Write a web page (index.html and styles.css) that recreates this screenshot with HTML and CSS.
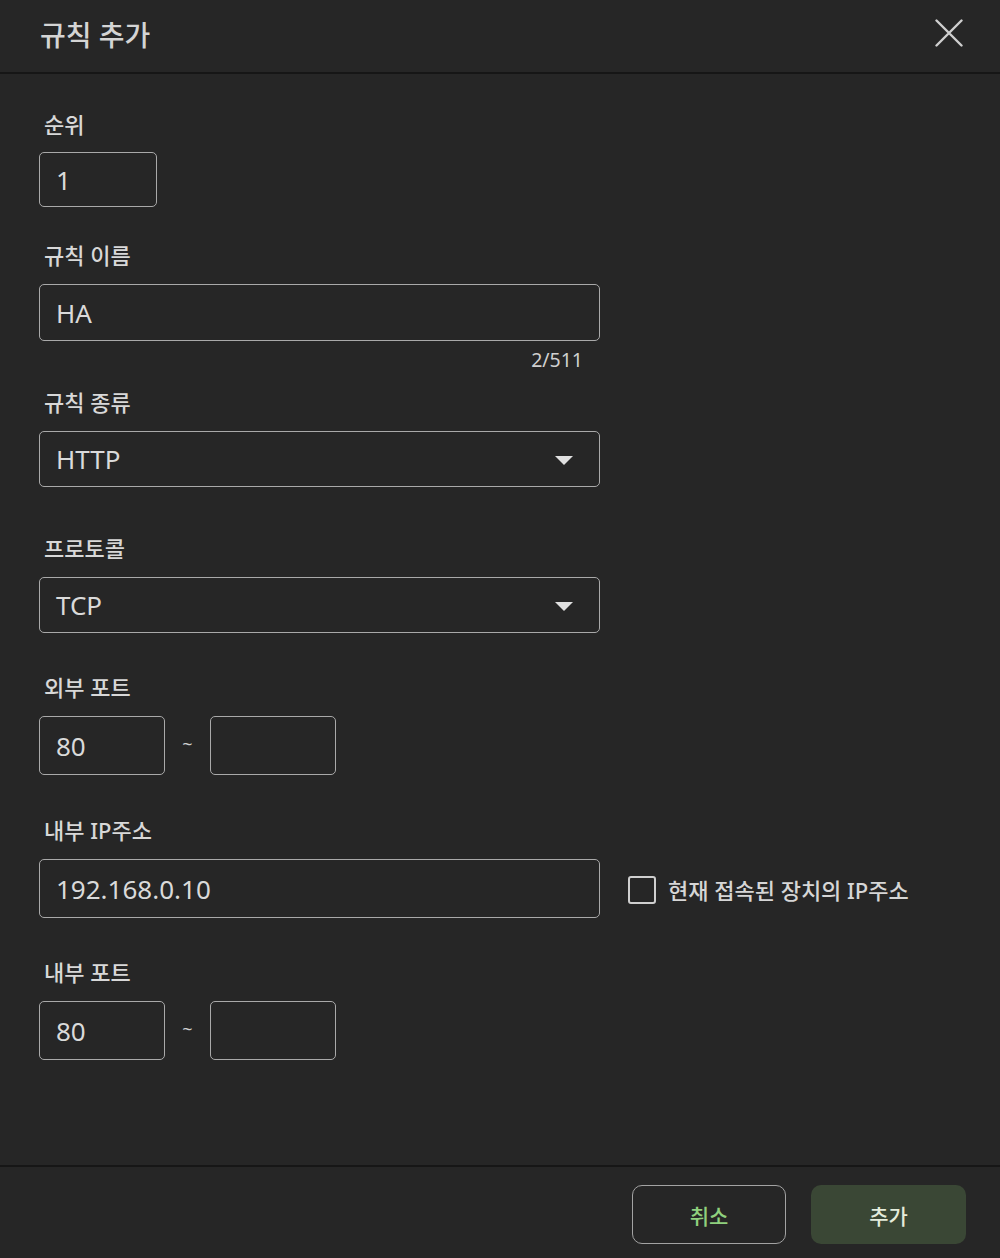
FILE: index.html
```html
<!DOCTYPE html>
<html lang="ko">
<head>
<meta charset="utf-8">
<link rel="stylesheet" href="styles.css">
</head>
<body>
<div class="dialog">
  <header class="head">
    <h1 class="title">규칙 추가</h1>
    <button class="close" aria-label="close">
      <svg width="28" height="28" viewBox="0 0 28 28"><path d="M1.5 1.5 L26.5 26.5 M26.5 1.5 L1.5 26.5" stroke="#cfcfcf" stroke-width="2.4" fill="none" stroke-linecap="round"/></svg>
    </button>
  </header>
  <main class="body">
    <div class="field f1">
      <div class="label">순위</div>
      <div class="input w-sm h55"><span class="val">1</span></div>
    </div>
    <div class="field f2">
      <div class="label">규칙 이름</div>
      <div class="input w-lg h57"><span class="val">HA</span></div>
      <div class="counter">2/511</div>
    </div>
    <div class="field f3">
      <div class="label">규칙 종류</div>
      <div class="input w-lg h56 select"><span class="val">HTTP</span><span class="caret"></span></div>
    </div>
    <div class="field f4">
      <div class="label">프로토콜</div>
      <div class="input w-lg h56 select"><span class="val">TCP</span><span class="caret"></span></div>
    </div>
    <div class="field f5">
      <div class="label">외부 포트</div>
      <div class="range">
        <div class="input w-port h59"><span class="val">80</span></div>
        <span class="tilde">~</span>
        <div class="input w-port h59"></div>
      </div>
    </div>
    <div class="field f6">
      <div class="label">내부 IP주소</div>
      <div class="row">
        <div class="input w-lg h59"><span class="val">192.168.0.10</span></div>
        <label class="check"><span class="box"></span><span class="check-text">현재 접속된 장치의 IP주소</span></label>
      </div>
    </div>
    <div class="field f7">
      <div class="label">내부 포트</div>
      <div class="range">
        <div class="input w-port h59"><span class="val">80</span></div>
        <span class="tilde">~</span>
        <div class="input w-port h59"></div>
      </div>
    </div>
  </main>
  <footer class="foot">
    <button class="btn cancel">취소</button>
    <button class="btn add">추가</button>
  </footer>
</div>
</body>
</html>
```
FILE: styles.css
```css
* { box-sizing: border-box; }
html, body { margin: 0; padding: 0; }
body {
  background: #262626;
  color: #d6d6d6;
  font-family: "Noto Sans", "Noto Sans CJK KR", sans-serif;
  width: 1000px;
  height: 1258px;
  overflow: hidden;
}
.dialog { display: flex; flex-direction: column; height: 1258px; }
.head {
  height: 74px;
  display: flex;
  align-items: center;
  justify-content: space-between;
  padding: 0 37px 0 40px;
  border-bottom: 2px solid #161616;
  flex-shrink: 0;
}
.title {
  margin: 0;
  font-size: 28px;
  font-weight: 500;
  color: #d4d4d4;
  line-height: 1;
  margin-top: -3px;
}
.close {
  background: none;
  border: none;
  padding: 0;
  width: 28px;
  height: 28px;
  margin-top: -6px;
  cursor: pointer;
}
.body {
  flex: 1;
  padding: 0 40px 0 39px;
  display: flex;
  flex-direction: column;
}
.field { display: flex; flex-direction: column; }
.f1 { margin-top: 36px; }
.f2 { margin-top: 34px; }
.f3 { margin-top: 16px; }
.f4 { margin-top: 47px; }
.f5 { margin-top: 40px; }
.f6 { margin-top: 41px; }
.f7 { margin-top: 40px; }
.label {
  font-size: 22px;
  font-weight: 500;
  line-height: 28px;
  height: 28px;
  padding-left: 5px;
  margin-bottom: 15px;
  color: #d8d8d8;
}
.f1 .label { margin-bottom: 14px; }
.input {
  border: 1.5px solid #a9a9a9;
  border-radius: 5px;
  display: flex;
  align-items: center;
  padding-left: 16px;
  position: relative;
}
.val { font-size: 26px; color: #dadada; line-height: 1; }
.w-sm { width: 118px; }
.w-lg { width: 561px; }
.w-port { width: 126px; }
.h55 { height: 55px; }
.h56 { height: 56px; }
.h57 { height: 57px; }
.h59 { height: 59px; }
.select { justify-content: space-between; padding-right: 26px; }
.caret {
  width: 0; height: 0;
  border-left: 9px solid transparent;
  border-right: 9px solid transparent;
  border-top: 9px solid #e0e0e0;
  margin-top: 2px;
}
.counter {
  width: 561px;
  text-align: right;
  padding-right: 17px;
  font-size: 19.5px;
  line-height: 24px;
  margin-top: 7px;
  color: #d0d0d0;
}
.range { display: flex; align-items: center; }
.tilde {
  width: 45px;
  text-align: center;
  font-size: 18px;
  color: #cfcfcf;
  margin-top: -4px;
}
.row { display: flex; align-items: center; }
.check { display: flex; align-items: center; margin-left: 28px; }
.box {
  width: 28px; height: 28px;
  border: 2.5px solid #cfcfcf;
  border-radius: 3px;
  margin-top: 2px;
}
.check-text {
  margin-left: 12px;
  font-size: 22px;
  font-weight: 500;
  color: #d6d6d6;
}
.foot {
  height: 93px;
  border-top: 2px solid #161616;
  display: flex;
  justify-content: flex-end;
  align-items: flex-start;
  padding: 18px 34px 0 0;
  gap: 25px;
  flex-shrink: 0;
}
.btn {
  width: 155px;
  height: 59px;
  border-radius: 10px;
  font-family: "Noto Sans", "Noto Sans CJK KR", sans-serif;
  font-size: 21px;
  font-weight: 500;
  cursor: pointer;
}
.cancel {
  background: transparent;
  border: 1.5px solid #a3a3a3;
  color: #8fd07e;
  width: 154px;
}
.add {
  background: #3a4735;
  border: none;
  color: #e4ecdc;
}
```
